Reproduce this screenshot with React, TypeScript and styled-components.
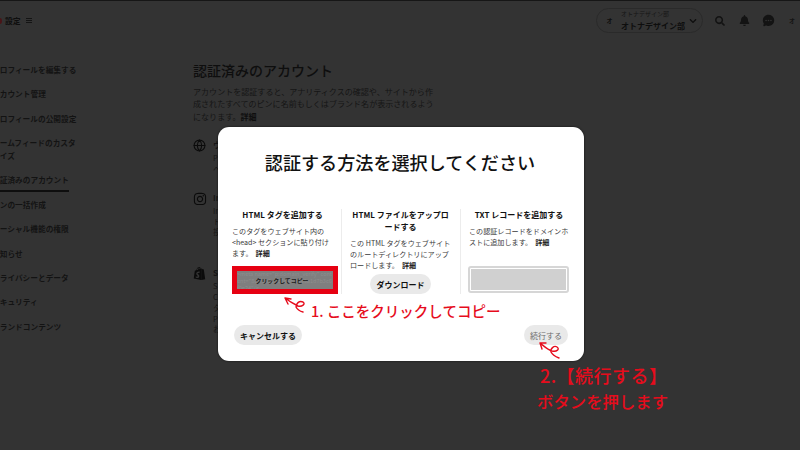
import React from 'react'
import styled, { createGlobalStyle } from 'styled-components'
import { Globe } from 'lucide-react'
import { FaBell, FaChevronDown, FaInstagram, FaSearch } from 'react-icons/fa'
import { IoChatbubbleEllipses } from 'react-icons/io5'
import { SiShopify } from 'react-icons/si'

const FONT = '"Noto Sans CJK JP", "Noto Sans", "Liberation Sans", sans-serif'
const RED = '#e60c1c'
const INK = '#0e0e0e'

const GlobalStyle = createGlobalStyle`
  html, body {
    margin: 0;
    padding: 0;
    background: #333;
  }
  * {
    box-sizing: border-box;
  }
`

const Page = styled.div`
  position: relative;
  width: 800px;
  height: 450px;
  overflow: hidden;
  background: #333;
  border-top: 1px solid #161616;
  font-family: ${FONT};
  color: ${INK};
`

const Header = styled.header`
  display: flex;
  align-items: center;
  height: 39px;
  padding: 0 0 0 5px;
`

const HeaderDot = styled.span`
  width: 4px;
  height: 6px;
  margin: 0 3px 0 -7px;
  border-radius: 50%;
  background: #4a1518;
`

const HeaderTitle = styled.span`
  font-size: 7.8px;
  font-weight: 700;
`

const MenuGlyph = styled.span`
  width: 6px;
  height: 5px;
  margin-left: 5px;
  background: repeating-linear-gradient(#141414 0 1px, #333 1px 2px);
`

const HeaderRight = styled.div`
  display: flex;
  align-items: center;
  margin-left: auto;
`

const AccountPill = styled.div`
  display: flex;
  align-items: center;
  width: 107px;
  height: 25px;
  margin-right: 10px;
  padding: 0 5px 0 7px;
  border: 1px solid #2a2a2a;
  border-radius: 13px;
`

const AccountText = styled.div`
  display: flex;
  flex-direction: column;
  gap: 2px;
  margin-left: 6px;
  margin-right: auto;
`

const AccountSub = styled.span`
  font-size: 6px;
  line-height: 8px;
  color: #161616;
`

const AccountName = styled.span`
  font-size: 8px;
  line-height: 11px;
  font-weight: 700;
`

const Avatar = styled.span`
  display: flex;
  align-items: center;
  justify-content: center;
  width: 11px;
  height: 11px;
  font-size: 6px;
  font-weight: 700;
`

const IconSlot = styled.span<{ $gap?: number }>`
  display: flex;
  justify-content: center;
  width: 14px;
  margin-right: ${({ $gap }) => $gap ?? 10}px;
  color: #131313;
`

const Body = styled.div`
  display: flex;
`

const Sidebar = styled.nav`
  display: flex;
  flex-direction: column;
  width: 201px;
  margin-left: -8px;
  padding-top: 23px;
`

const NavItem = styled.div<{ $active?: boolean }>`
  align-self: flex-start;
  width: ${({ $active }) => ($active ? 'fit-content' : '85px')};
  margin-bottom: ${({ $active }) => ($active ? '6px' : '11.3px')};
  padding-bottom: ${({ $active }) => ($active ? '4px' : '0')};
  border-bottom: ${({ $active }) => ($active ? `2px solid ${INK}` : 'none')};
  font-size: 7.7px;
  line-height: 13px;
  font-weight: 700;
  color: #131313;
`

const Main = styled.main`
  width: 250px;
  padding-top: 20px;
`

const Heading = styled.h1`
  margin: 0 0 6px;
  font-size: 14px;
  line-height: 20px;
  font-weight: 500;
`

const Lead = styled.p`
  width: 245px;
  margin: 0;
  font-size: 8.06px;
  line-height: 12.4px;
  color: #151515;
`

const Strong = styled.b`
  font-weight: 700;
  color: ${INK};
`

const ModalStrong = styled(Strong)`
  margin-left: 3px;
  color: #222;
`

const AccountRow = styled.div<{ $top: number }>`
  display: grid;
  grid-template-columns: 20px 1fr;
  margin-top: ${({ $top }) => $top}px;
  color: #151515;
`

const RowIcon = styled.span`
  display: flex;
  justify-content: flex-start;
  color: #0b0b0b;
`

const RowTitle = styled.div`
  font-size: 8px;
  line-height: 12px;
  font-weight: 700;
  margin-bottom: 2px;
`

const RowLine = styled.div`
  font-size: 7.6px;
  line-height: 10.8px;
`

const Modal = styled.section`
  position: absolute;
  left: 218px;
  top: 126px;
  display: flex;
  flex-direction: column;
  width: 366px;
  height: 234px;
  padding: 22px 16px 16px 14px;
  border-radius: 11px;
  background: #fff;
  box-shadow: 0 0 2px #0c0c0c;
  color: #111;
`

const ModalTitle = styled.h2`
  margin: 0 0 34px;
  text-align: center;
  font-size: 18.1px;
  line-height: 26px;
  font-weight: 500;
`

const Columns = styled.div`
  display: grid;
  grid-template-columns: 109px 119px 1fr;
  height: 85px;
`

const Column = styled.div<{ $divider?: boolean }>`
  display: flex;
  flex-direction: column;
  padding: ${({ $divider }) => ($divider ? '0 9px 0 8px' : '0 8px 0 0')};
  border-left: ${({ $divider }) => ($divider ? '1px solid #ececec' : 'none')};
`

const ColumnTitle = styled.h3`
  margin: 0 0 5px;
  text-align: center;
  font-size: 8px;
  line-height: 12px;
  font-weight: 700;
`

const ColumnText = styled.p`
  margin: 0;
  font-size: 7.1px;
  line-height: 10.9px;
  color: #3a3a3a;
`

const CopyBox = styled.div`
  position: relative;
  display: flex;
  flex-shrink: 0;
  align-items: center;
  justify-content: center;
  width: 106px;
  height: 28px;
  margin-top: auto;
  padding-right: 6px;
  border: 5px solid #e60012;
  background: #7f7f7f;
  overflow: hidden;
`

const CopyCode = styled.span`
  position: absolute;
  left: 0;
  top: 0;
  width: 100%;
  font-size: 5.5px;
  line-height: 7px;
  color: #8e8e8e;
  word-break: break-all;
`

const CopyLabel = styled.span`
  position: relative;
  font-size: 5.9px;
  font-weight: 700;
  color: #1a1a1a;
`

const RecordBox = styled.div`
  flex-shrink: 0;
  width: 101px;
  height: 27px;
  margin: auto 0 1px -1px;
  border: 2px solid #d6d6d6;
  border-radius: 3px;
  padding: 1px;
  background: #fff;
`

const RecordFill = styled.div`
  height: 100%;
  background: #d0d0d0;
`

const Pill = styled.button<{ $muted?: boolean }>`
  height: 20px;
  padding: 0 6px;
  border: none;
  border-radius: 10px;
  background: #e9e9e9;
  font-family: ${FONT};
  font-size: 8px;
  font-weight: ${({ $muted }) => ($muted ? 400 : 700)};
  color: ${({ $muted }) => ($muted ? '#6d6d6d' : '#111')};
`

const CenterPill = styled(Pill)`
  align-self: center;
  flex-shrink: 0;
  width: 61px;
  margin: auto 0 0;
`

const Footer = styled.div`
  display: flex;
  justify-content: space-between;
  margin-top: auto;
  padding: 0 0 0 2px;
`

const Note = styled.div<{ $x: number; $y: number; $size: number; $spacing?: number }>`
  position: absolute;
  left: ${({ $x }) => $x}px;
  top: ${({ $y }) => $y}px;
  font-size: ${({ $size }) => $size}px;
  line-height: 1;
  letter-spacing: ${({ $spacing }) => $spacing ?? 0}px;
  font-weight: 500;
  white-space: nowrap;
  color: ${RED};
`

const Arrow = styled.svg<{ $x: number; $y: number }>`
  position: absolute;
  left: ${({ $x }) => $x}px;
  top: ${({ $y }) => $y}px;
  fill: none;
  stroke: ${RED};
  stroke-width: 1.4;
  stroke-linecap: round;
  stroke-linejoin: round;
`

const navItems = [
  'プロフィールを編集する',
  'アカウント管理',
  'プロフィールの公開設定',
  'ホームフィードのカスタマイズ',
  '認証済みのアカウント',
  'ピンの一括作成',
  'ソーシャル機能の権限',
  'お知らせ',
  'プライバシーとデータ',
  'セキュリティ',
  'ブランドコンテンツ',
]

const App: React.FC = () => (
  <Page>
    <GlobalStyle />
    <Header>
      <HeaderDot />
      <HeaderTitle>設定</HeaderTitle>
      <MenuGlyph />
      <HeaderRight>
        <AccountPill>
          <Avatar>オ</Avatar>
          <AccountText>
            <AccountSub>オトナデザイン部</AccountSub>
            <AccountName>オトナデザイン部</AccountName>
          </AccountText>
          <FaChevronDown size={8} />
        </AccountPill>
        <IconSlot>
          <FaSearch size={10} />
        </IconSlot>
        <IconSlot>
          <FaBell size={11} />
        </IconSlot>
        <IconSlot>
          <IoChatbubbleEllipses size={13} />
        </IconSlot>
        <IconSlot $gap={1}>
          <Avatar>オ</Avatar>
        </IconSlot>
      </HeaderRight>
    </Header>
    <Body>
      <Sidebar>
        {navItems.map((item) => (
          <NavItem key={item} $active={item === '認証済みのアカウント'}>
            {item}
          </NavItem>
        ))}
      </Sidebar>
      <Main>
        <Heading>認証済みのアカウント</Heading>
        <Lead>
          アカウントを認証すると、アナリティクスの確認や、サイトから作成されたすべてのピンに名前もしくはブランド名が表示されるようになります。
          <Strong>詳細</Strong>
        </Lead>
        <AccountRow $top={16}>
          <RowIcon>
            <Globe size={13} strokeWidth={2} />
          </RowIcon>
          <div>
            <RowTitle>ウェブサイト</RowTitle>
            <RowLine>Pinterest</RowLine>
            <RowLine>ヘ</RowLine>
          </div>
        </AccountRow>
        <AccountRow $top={17}>
          <RowIcon>
            <FaInstagram size={14} />
          </RowIcon>
          <div>
            <RowTitle>Instagram</RowTitle>
            <RowLine>In</RowLine>
            <RowLine>ト</RowLine>
            <RowLine>投</RowLine>
          </div>
        </AccountRow>
        <AccountRow $top={29}>
          <RowIcon>
            <SiShopify size={13} />
          </RowIcon>
          <div>
            <RowTitle>Shopify</RowTitle>
            <RowLine>S</RowLine>
            <RowLine>C</RowLine>
            <RowLine>タ</RowLine>
            <RowLine>P</RowLine>
            <RowLine>お</RowLine>
          </div>
        </AccountRow>
      </Main>
    </Body>

    <Modal>
      <ModalTitle>認証する方法を選択してください</ModalTitle>
      <Columns>
        <Column>
          <ColumnTitle>HTML タグを追加する</ColumnTitle>
          <ColumnText>
            このタグをウェブサイト内の &lt;head&gt; セクションに貼り付けます。<ModalStrong>詳細</ModalStrong>
          </ColumnText>
          <CopyBox>
            <CopyCode>&lt;meta name="p:domain_verify" content="8c3f1a6e0b7d4c2f9e5a1d7b3c6f0e24"/&gt;</CopyCode>
            <CopyLabel>クリックしてコピー</CopyLabel>
          </CopyBox>
        </Column>
        <Column $divider>
          <ColumnTitle>HTML ファイルをアップロードする</ColumnTitle>
          <ColumnText>
            この HTML タグをウェブサイトのルートディレクトリにアップロードします。<ModalStrong>詳細</ModalStrong>
          </ColumnText>
          <CenterPill>ダウンロード</CenterPill>
        </Column>
        <Column $divider>
          <ColumnTitle>TXT レコードを追加する</ColumnTitle>
          <ColumnText>
            この認証レコードをドメインホストに追加します。<ModalStrong>詳細</ModalStrong>
          </ColumnText>
          <RecordBox>
            <RecordFill />
          </RecordBox>
        </Column>
      </Columns>
      <Footer>
        <Pill>キャンセルする</Pill>
        <Pill $muted>続行する</Pill>
      </Footer>
    </Modal>

    <Arrow $x={284} $y={295} width={26} height={20} viewBox="0 0 26 20">
      <path d="M1 2 L7 3 M1 2 L4 8 M1 2 C6 6 10 8 14 10 C18 11 22 8 19 6 C15 4 12 8 12 11 C13 13 15 15 19 16" />
    </Arrow>
    <Note $x={311} $y={303} $size={14.5} $spacing={0}>1. ここをクリックしてコピー</Note>

    <Arrow $x={539} $y={340} width={24} height={20} viewBox="0 0 24 20">
      <path d="M1 2 L7 2 M1 2 L3 8 M1 2 C6 6 9 9 13 10 C18 11 21 8 18 6 C15 4 11 8 12 11 C13 13 15 15 20 17" />
    </Arrow>
    <Note $x={540} $y={365} $size={18} $spacing={0.5}>2.【続行する】</Note>
    <Note $x={537} $y={392} $size={16.4}>ボタンを押します</Note>
  </Page>
)

export default App
